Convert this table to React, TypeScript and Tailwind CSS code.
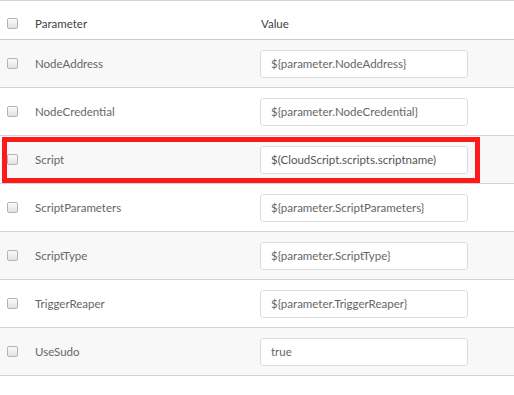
import React from 'react';

type Param = { name: string; value: string; highlight?: boolean };

const params: Param[] = [
  { name: 'NodeAddress', value: '${parameter.NodeAddress}' },
  { name: 'NodeCredential', value: '${parameter.NodeCredential}' },
  { name: 'Script', value: '$(CloudScript.scripts.scriptname)', highlight: true },
  { name: 'ScriptParameters', value: '${parameter.ScriptParameters}' },
  { name: 'ScriptType', value: '${parameter.ScriptType}' },
  { name: 'TriggerReaper', value: '${parameter.TriggerReaper}' },
  { name: 'UseSudo', value: 'true' },
];

const Checkbox: React.FC = () => (
  <span className="block w-[11px] h-[11px] rounded-[2px] border border-[#b4b4b4] bg-gradient-to-b from-[#fbfbfb] to-[#e2e2e2]" />
);

const App: React.FC = () => {
  return (
    <div className="w-[514px] h-[395px] bg-white font-['Lato','Open_Sans',sans-serif] text-[11.5px] text-[#666]">
      <div className="border-t border-[#d4d4d4]">
        {/* header */}
        <div className="grid grid-cols-[35px_225px_1fr] items-center h-[39px] pt-[7px] border-b border-[#c8c8c8]">
          <div className="pl-[7px]"><Checkbox /></div>
          <div className="text-[#444]">Parameter</div>
          <div className="pl-[1px] text-[#444]">Value</div>
        </div>

        {params.map((p, i) => (
          <div
            key={p.name}
            className={`relative grid grid-cols-[35px_225px_1fr] items-center h-[48px] border-b border-[#d4d4d4] ${i % 2 === 0 ? 'bg-[#f8f8f8]' : 'bg-white'}`}
          >
            <div className="pl-[7px]"><Checkbox /></div>
            <div>{p.name}</div>
            <div>
              <div className={`w-[208px] h-[28px] flex items-center px-[10px] bg-white border border-[#dcdcdc] rounded-[3px] ${p.highlight ? 'text-[#555]' : ''}`}>
                {p.value}
              </div>
            </div>
            {p.highlight && (
              <div className="absolute left-[2px] top-[1px] w-[478px] h-[46px] border-[5px] border-[#ff1a1a] pointer-events-none" />
            )}
          </div>
        ))}
      </div>
    </div>
  );
};

export default App;
